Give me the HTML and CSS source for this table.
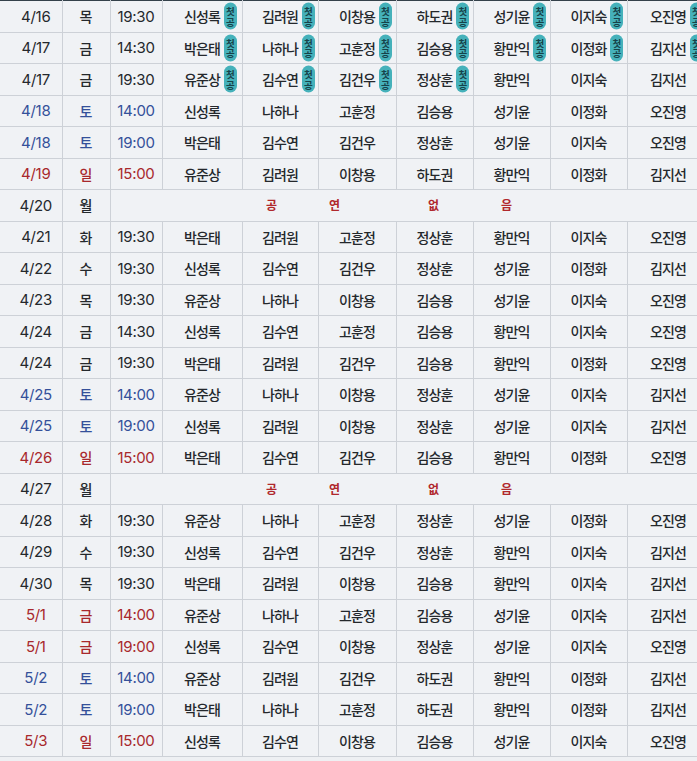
FILE: index.html
```html
<!DOCTYPE html>
<html lang="ko">
<head>
<meta charset="utf-8">
<title>캐스팅 일정</title>
<link rel="stylesheet" href="styles.css">
</head>
<body>
<table class="sched">
<colgroup>
<col class="c-date"><col class="c-day"><col class="c-time">
<col class="c-a1"><col class="c-a2"><col class="c-a3"><col class="c-a4"><col class="c-a5"><col class="c-a6"><col class="c-a7">
</colgroup>
<tbody>
<tr><td class="d">4/16</td><td class="w">목</td><td class="t">19:30</td><td><span class="nm">신성록<i class="bd">첫<br>공</i></span></td><td><span class="nm">김려원<i class="bd">첫<br>공</i></span></td><td><span class="nm">이창용<i class="bd">첫<br>공</i></span></td><td><span class="nm">하도권<i class="bd">첫<br>공</i></span></td><td><span class="nm">성기윤<i class="bd">첫<br>공</i></span></td><td><span class="nm">이지숙<i class="bd">첫<br>공</i></span></td><td><span class="nm">오진영<i class="bd">첫<br>공</i></span></td></tr>
<tr><td class="d">4/17</td><td class="w">금</td><td class="t">14:30</td><td><span class="nm">박은태<i class="bd">첫<br>공</i></span></td><td><span class="nm">나하나<i class="bd">첫<br>공</i></span></td><td><span class="nm">고훈정<i class="bd">첫<br>공</i></span></td><td><span class="nm">김승용<i class="bd">첫<br>공</i></span></td><td><span class="nm">황만익<i class="bd">첫<br>공</i></span></td><td><span class="nm">이정화<i class="bd">첫<br>공</i></span></td><td><span class="nm">김지선<i class="bd">첫<br>공</i></span></td></tr>
<tr><td class="d">4/17</td><td class="w">금</td><td class="t">19:30</td><td><span class="nm">유준상<i class="bd">첫<br>공</i></span></td><td><span class="nm">김수연<i class="bd">첫<br>공</i></span></td><td><span class="nm">김건우<i class="bd">첫<br>공</i></span></td><td><span class="nm">정상훈<i class="bd">첫<br>공</i></span></td><td><span class="nm">황만익</span></td><td><span class="nm">이지숙</span></td><td><span class="nm">김지선</span></td></tr>
<tr class="sat"><td class="d">4/18</td><td class="w">토</td><td class="t">14:00</td><td>신성록</td><td>나하나</td><td>고훈정</td><td>김승용</td><td>성기윤</td><td>이정화</td><td>오진영</td></tr>
<tr class="sat"><td class="d">4/18</td><td class="w">토</td><td class="t">19:00</td><td>박은태</td><td>김수연</td><td>김건우</td><td>정상훈</td><td>성기윤</td><td>이지숙</td><td>오진영</td></tr>
<tr class="sun"><td class="d">4/19</td><td class="w">일</td><td class="t">15:00</td><td>유준상</td><td>김려원</td><td>이창용</td><td>하도권</td><td>황만익</td><td>이정화</td><td>김지선</td></tr>
<tr><td class="d">4/20</td><td class="w">월</td><td class="off" colspan="8"><span class="ch c1">공</span><span class="ch c2">연</span><span class="ch c3">없</span><span class="ch c4">음</span></td></tr>
<tr><td class="d">4/21</td><td class="w">화</td><td class="t">19:30</td><td>박은태</td><td>김려원</td><td>고훈정</td><td>정상훈</td><td>황만익</td><td>이지숙</td><td>오진영</td></tr>
<tr><td class="d">4/22</td><td class="w">수</td><td class="t">19:30</td><td>신성록</td><td>김수연</td><td>김건우</td><td>정상훈</td><td>성기윤</td><td>이정화</td><td>김지선</td></tr>
<tr><td class="d">4/23</td><td class="w">목</td><td class="t">19:30</td><td>유준상</td><td>나하나</td><td>이창용</td><td>김승용</td><td>성기윤</td><td>이지숙</td><td>오진영</td></tr>
<tr><td class="d">4/24</td><td class="w">금</td><td class="t">14:30</td><td>신성록</td><td>김수연</td><td>고훈정</td><td>김승용</td><td>황만익</td><td>이지숙</td><td>오진영</td></tr>
<tr><td class="d">4/24</td><td class="w">금</td><td class="t">19:30</td><td>박은태</td><td>김려원</td><td>김건우</td><td>김승용</td><td>황만익</td><td>이정화</td><td>오진영</td></tr>
<tr class="sat"><td class="d">4/25</td><td class="w">토</td><td class="t">14:00</td><td>유준상</td><td>나하나</td><td>이창용</td><td>정상훈</td><td>성기윤</td><td>이지숙</td><td>김지선</td></tr>
<tr class="sat"><td class="d">4/25</td><td class="w">토</td><td class="t">19:00</td><td>신성록</td><td>김려원</td><td>이창용</td><td>정상훈</td><td>성기윤</td><td>이지숙</td><td>김지선</td></tr>
<tr class="sun"><td class="d">4/26</td><td class="w">일</td><td class="t">15:00</td><td>박은태</td><td>김수연</td><td>김건우</td><td>김승용</td><td>황만익</td><td>이정화</td><td>오진영</td></tr>
<tr><td class="d">4/27</td><td class="w">월</td><td class="off" colspan="8"><span class="ch c1">공</span><span class="ch c2">연</span><span class="ch c3">없</span><span class="ch c4">음</span></td></tr>
<tr><td class="d">4/28</td><td class="w">화</td><td class="t">19:30</td><td>유준상</td><td>나하나</td><td>고훈정</td><td>정상훈</td><td>성기윤</td><td>이정화</td><td>오진영</td></tr>
<tr><td class="d">4/29</td><td class="w">수</td><td class="t">19:30</td><td>신성록</td><td>김수연</td><td>김건우</td><td>정상훈</td><td>황만익</td><td>이지숙</td><td>김지선</td></tr>
<tr><td class="d">4/30</td><td class="w">목</td><td class="t">19:30</td><td>박은태</td><td>김려원</td><td>이창용</td><td>김승용</td><td>황만익</td><td>이지숙</td><td>김지선</td></tr>
<tr class="sun"><td class="d">5/1</td><td class="w">금</td><td class="t">14:00</td><td>유준상</td><td>나하나</td><td>고훈정</td><td>김승용</td><td>성기윤</td><td>이지숙</td><td>김지선</td></tr>
<tr class="sun"><td class="d">5/1</td><td class="w">금</td><td class="t">19:00</td><td>신성록</td><td>김수연</td><td>이창용</td><td>정상훈</td><td>성기윤</td><td>이지숙</td><td>오진영</td></tr>
<tr class="sat"><td class="d">5/2</td><td class="w">토</td><td class="t">14:00</td><td>유준상</td><td>김려원</td><td>김건우</td><td>하도권</td><td>황만익</td><td>이정화</td><td>김지선</td></tr>
<tr class="sat"><td class="d">5/2</td><td class="w">토</td><td class="t">19:00</td><td>박은태</td><td>나하나</td><td>고훈정</td><td>하도권</td><td>황만익</td><td>이정화</td><td>김지선</td></tr>
<tr class="sun"><td class="d">5/3</td><td class="w">일</td><td class="t">15:00</td><td>신성록</td><td>김수연</td><td>이창용</td><td>김승용</td><td>성기윤</td><td>이지숙</td><td>오진영</td></tr>
</tbody>
</table>
</body>
</html>
```
FILE: styles.css
```css
html, body {
  margin: 0;
  padding: 0;
  background: #eef0f3;
  overflow: hidden;
}

body {
  font-family: "Noto Sans CJK KR", "Noto Sans", sans-serif;
  color: #24282c;
}

.sched {
  border-collapse: collapse;
  table-layout: fixed;
  width: 709px;
  border-top: 1px solid #34414a;
}

.c-date { width: 62px; }
.c-day { width: 48px; }
.c-time { width: 52px; }
.c-a1 { width: 80px; }
.c-a2 { width: 76px; }
.c-a3 { width: 78px; }
.c-a4 { width: 77px; }
.c-a5 { width: 77px; }
.c-a6 { width: 77px; }
.c-a7 { width: 82px; }

.sched tr {
  height: 31.5px;
}

.sched td {
  padding: 0;
  border: 1px solid #cdd1d7;
  text-align: center;
  vertical-align: middle;
  font-size: 14px;
  font-weight: 500;
  letter-spacing: -0.9px;
  line-height: 1;
  white-space: nowrap;
  background: #f0f2f5;
}

.sched tr:first-child td {
  border-top-color: #34414a;
}

.sched td:first-child {
  border-left: none;
}

.sched td.d,
.sched td.t {
  font-family: Inter, "Noto Sans", sans-serif;
  font-size: 15px;
  font-weight: 400;
  letter-spacing: -0.3px;
}

.sched td.d {
  padding-left: 10px;
}

.sched td.w {
  font-size: 14px;
  letter-spacing: 0;
}

.sat td.d, .sat td.w, .sat td.t {
  color: #34509a;
}

.sun td.d, .sun td.w, .sun td.t {
  color: #a8282c;
}

.nm {
  position: relative;
  display: inline-block;
}

.bd {
  position: absolute;
  left: calc(100% + 4px);
  top: 50%;
  transform: translateY(-50%);
  width: 13px;
  height: 27px;
  border-radius: 6.5px;
  background: #45b1ba;
  color: #16434a;
  font-style: normal;
  font-size: 9.5px;
  font-weight: 700;
  line-height: 10.5px;
  letter-spacing: 0;
  display: flex;
  flex-direction: column;
  align-items: center;
  justify-content: center;
}

.sched td.off {
  text-align: left;
  color: #b0282c;
  font-size: 12px;
  font-weight: 700;
  letter-spacing: 0;
}

.ch {
  display: inline-block;
  width: 12px;
  text-align: center;
}

.c1 { margin-left: 155px; }
.c2 { margin-left: 51px; }
.c3 { margin-left: 87px; }
.c4 { margin-left: 61px; }
```
